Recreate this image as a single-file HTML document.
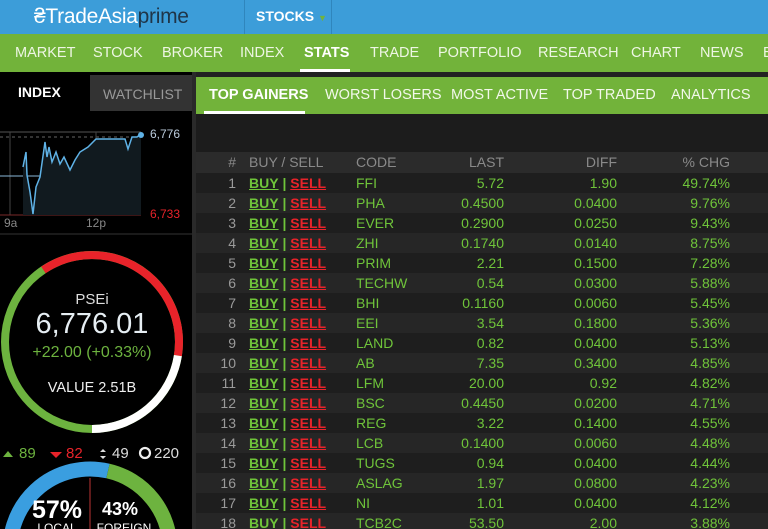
<!DOCTYPE html><html><head><style>
*{margin:0;padding:0;box-sizing:border-box}
html,body{width:768px;height:529px;overflow:hidden}
body{background:#1c1c1c;font-family:"Liberation Sans",sans-serif;position:relative}
.a{position:absolute}
#top{left:0;top:0;width:768px;height:34px;background:#3c9dd9}
#nav{left:0;top:34px;width:768px;height:38px;background:#72b33a;color:#eef6e4;font-size:14.5px}
#nav span{position:absolute;top:11px}
#left{left:0;top:72px;width:192px;height:457px;background:#000;overflow:hidden}
#sub{left:196px;top:77px;width:572px;height:37px;background:#72b33a;color:#f2f8ea;font-size:14.5px}
#sub span{position:absolute;top:10px}
.row{position:absolute;left:196px;width:572px;height:20px;font-size:14px;color:#6fc43a;background:#1e1e1e;overflow:hidden}
.row.e{background:#262626}
.row span{position:absolute;top:2px;white-space:nowrap}
.c0{right:532px;color:#9a9a9a}
.c1{left:53px}
.c2{left:160px}
.c3{right:264px}
.c4{right:151px}
.c5{right:38px}
.b{color:#6fc43a;font-weight:bold;text-decoration:underline}
.s{color:#e8232a;font-weight:bold;text-decoration:underline}
.h{background:#2b2b2b;color:#8a8a8a;height:21px}
.h span{color:#8a8a8a}
</style></head><body>
<div class="a" id="top">
<div class="a" style="left:34px;top:5px;font-size:21px;color:#fff;letter-spacing:-0.3px">₴TradeAsia<span style="color:#1f3548">prime</span></div>
<div class="a" style="left:244px;top:0;width:1px;height:34px;background:#2f86bd"></div>
<div class="a" style="left:331px;top:0;width:1px;height:34px;background:#2f86bd"></div>
<div class="a" style="left:256px;top:8px;font-size:14px;font-weight:bold;color:#fff">STOCKS <span style="color:#72b33a;font-size:9px">▼</span></div>
</div>
<div class="a" id="nav">
<span style="left:15px">MARKET</span><span style="left:93px">STOCK</span><span style="left:162px">BROKER</span><span style="left:240px">INDEX</span><span style="left:304px;font-weight:bold;color:#fff">STATS</span><span style="left:370px">TRADE</span><span style="left:438px">PORTFOLIO</span><span style="left:538px">RESEARCH</span><span style="left:631px">CHART</span><span style="left:700px">NEWS</span><span style="left:763px">B</span>
<div class="a" style="left:300px;top:35px;width:50px;height:3px;background:#fff"></div>
</div>
<div class="a" style="left:0;top:72px;width:768px;height:5px;background:#222"></div>
<div class="a" id="left">
<div class="a" style="left:18px;top:12px;color:#fff;font-weight:bold;font-size:14px">INDEX</div>
<div class="a" style="left:90px;top:3px;width:102px;height:36px;background:#333;color:#999;font-size:14px;padding:11px 0 0 13px">WATCHLIST</div>
<svg class="a" style="left:0;top:50px" width="192" height="407">
<line x1="0" y1="10" x2="141" y2="10" stroke="#555"/>
<line x1="0" y1="15" x2="141" y2="15" stroke="#666" stroke-dasharray="3,3"/>
<line x1="10" y1="10" x2="10" y2="93" stroke="#444"/>
<line x1="96" y1="10" x2="96" y2="93" stroke="#444"/>
<line x1="0" y1="93" x2="141" y2="93" stroke="#7a2a2a"/>
<line x1="0" y1="54" x2="141" y2="54" stroke="#8ab8d8"/>
<path d="M23,45 L26,30 L27,53 L30,70 L33,92 L36,65 L40,55 L45,20 L47,35 L49,25 L52,40 L56,30 L60,42 L64,35 L70,48 L75,38 L80,30 L88,25 L96,17 L125,17 L128,27 L132,15 L137,15 L141,12 L141,93 L23,93Z" fill="#111a1f"/>
<path d="M23,45 L26,30 L27,53 L30,70 L33,92 L36,65 L40,55 L45,20 L47,35 L49,25 L52,40 L56,30 L60,42 L64,35 L70,48 L75,38 L80,30 L88,25 L96,17 L125,17 L128,27 L132,15 L137,15 L141,12" fill="none" stroke="#5fb2e6" stroke-width="1.5"/>
<circle cx="141" cy="13" r="3" fill="#5fb2e6"/>
<text x="150" y="16" fill="#bcd" font-size="12">6,776</text>
<text x="150" y="96" fill="#e8232a" font-size="12">6,733</text>
<text x="4" y="105" fill="#888" font-size="12">9a</text>
<text x="86" y="105" fill="#888" font-size="12">12p</text>
<line x1="0" y1="112" x2="192" y2="112" stroke="#333"/>
<g transform="translate(92,220)" fill="none" stroke-width="8">
<circle r="87" stroke="#6db33f"/>
<path d="M-48.6,-72.1 A87,87 0 0 1 85.9,13.6" stroke="#e8232a"/>
<path d="M85.9,13.6 A87,87 0 0 1 0,87" stroke="#fff"/>
</g>
<text x="92" y="182" fill="#ddd" font-size="15" text-anchor="middle">PSEi</text>
<text x="92" y="211" fill="#e6eef3" font-size="29" text-anchor="middle">6,776.01</text>
<text x="92" y="235" fill="#6db33f" font-size="16" text-anchor="middle">+22.00 (+0.33%)</text>
<text x="92" y="270" fill="#eee" font-size="14.5" text-anchor="middle">VALUE 2.51B</text>
<path d="M3,335 L8,329 L13,335Z" fill="#6db33f"/><text x="19" y="336" fill="#6db33f" font-size="15">89</text>
<path d="M50,330 L56,336 L62,330Z" fill="#e8232a"/><text x="66" y="336" fill="#e8232a" font-size="15">82</text>
<path d="M100,330 L103,327 L106,330Z M100,334 L103,337 L106,334Z" fill="#ddd"/><text x="112" y="336" fill="#ddd" font-size="15">49</text>
<circle cx="145" cy="331" r="5" fill="none" stroke="#eee" stroke-width="2.2"/><text x="154" y="336" fill="#ddd" font-size="15">220</text>
<g transform="translate(90,427)" fill="none" stroke-width="15">
<path d="M-79,12 A80,80 0 0 1 18,-78" stroke="#3a9ee0"/>
<path d="M18,-78 A80,80 0 0 1 80,0" stroke="#6db33f"/>
</g>
<line x1="90" y1="356" x2="90" y2="407" stroke="#b33"/>
<text x="57" y="396" fill="#fff" font-size="25" font-weight="bold" text-anchor="middle">57%</text>
<text x="120" y="393" fill="#fff" font-size="18" font-weight="bold" text-anchor="middle">43%</text>
<text x="57" y="410" fill="#fff" font-size="12" text-anchor="middle">LOCAL</text>
<text x="124" y="410" fill="#fff" font-size="12" text-anchor="middle">FOREIGN</text>
</svg>
</div>
<div class="a" style="left:192px;top:72px;width:4px;height:457px;background:#2a2a2a"></div>
<div class="a" id="sub">
<span style="left:13px;font-weight:bold;color:#fff">TOP GAINERS</span><span style="left:129px">WORST LOSERS</span><span style="left:255px">MOST ACTIVE</span><span style="left:367px">TOP TRADED</span><span style="left:475px">ANALYTICS</span>
<div class="a" style="left:8px;top:34px;width:101px;height:3px;background:#fff"></div>
</div>
<div class="row h" style="top:152px"><span class="c0">#</span><span class="c1">BUY / SELL</span><span class="c2">CODE</span><span class="c3">LAST</span><span class="c4">DIFF</span><span class="c5">% CHG</span></div>
<div class="row" style="top:173px"><span class="c0">1</span><span class="c1"><u class="b">BUY</u> <b class="b" style="text-decoration:none">|</b> <u class="s">SELL</u></span><span class="c2">FFI</span><span class="c3">5.72</span><span class="c4">1.90</span><span class="c5">49.74%</span></div>
<div class="row e" style="top:193px"><span class="c0">2</span><span class="c1"><u class="b">BUY</u> <b class="b" style="text-decoration:none">|</b> <u class="s">SELL</u></span><span class="c2">PHA</span><span class="c3">0.4500</span><span class="c4">0.0400</span><span class="c5">9.76%</span></div>
<div class="row" style="top:213px"><span class="c0">3</span><span class="c1"><u class="b">BUY</u> <b class="b" style="text-decoration:none">|</b> <u class="s">SELL</u></span><span class="c2">EVER</span><span class="c3">0.2900</span><span class="c4">0.0250</span><span class="c5">9.43%</span></div>
<div class="row e" style="top:233px"><span class="c0">4</span><span class="c1"><u class="b">BUY</u> <b class="b" style="text-decoration:none">|</b> <u class="s">SELL</u></span><span class="c2">ZHI</span><span class="c3">0.1740</span><span class="c4">0.0140</span><span class="c5">8.75%</span></div>
<div class="row" style="top:253px"><span class="c0">5</span><span class="c1"><u class="b">BUY</u> <b class="b" style="text-decoration:none">|</b> <u class="s">SELL</u></span><span class="c2">PRIM</span><span class="c3">2.21</span><span class="c4">0.1500</span><span class="c5">7.28%</span></div>
<div class="row e" style="top:273px"><span class="c0">6</span><span class="c1"><u class="b">BUY</u> <b class="b" style="text-decoration:none">|</b> <u class="s">SELL</u></span><span class="c2">TECHW</span><span class="c3">0.54</span><span class="c4">0.0300</span><span class="c5">5.88%</span></div>
<div class="row" style="top:293px"><span class="c0">7</span><span class="c1"><u class="b">BUY</u> <b class="b" style="text-decoration:none">|</b> <u class="s">SELL</u></span><span class="c2">BHI</span><span class="c3">0.1160</span><span class="c4">0.0060</span><span class="c5">5.45%</span></div>
<div class="row e" style="top:313px"><span class="c0">8</span><span class="c1"><u class="b">BUY</u> <b class="b" style="text-decoration:none">|</b> <u class="s">SELL</u></span><span class="c2">EEI</span><span class="c3">3.54</span><span class="c4">0.1800</span><span class="c5">5.36%</span></div>
<div class="row" style="top:333px"><span class="c0">9</span><span class="c1"><u class="b">BUY</u> <b class="b" style="text-decoration:none">|</b> <u class="s">SELL</u></span><span class="c2">LAND</span><span class="c3">0.82</span><span class="c4">0.0400</span><span class="c5">5.13%</span></div>
<div class="row e" style="top:353px"><span class="c0">10</span><span class="c1"><u class="b">BUY</u> <b class="b" style="text-decoration:none">|</b> <u class="s">SELL</u></span><span class="c2">AB</span><span class="c3">7.35</span><span class="c4">0.3400</span><span class="c5">4.85%</span></div>
<div class="row" style="top:373px"><span class="c0">11</span><span class="c1"><u class="b">BUY</u> <b class="b" style="text-decoration:none">|</b> <u class="s">SELL</u></span><span class="c2">LFM</span><span class="c3">20.00</span><span class="c4">0.92</span><span class="c5">4.82%</span></div>
<div class="row e" style="top:393px"><span class="c0">12</span><span class="c1"><u class="b">BUY</u> <b class="b" style="text-decoration:none">|</b> <u class="s">SELL</u></span><span class="c2">BSC</span><span class="c3">0.4450</span><span class="c4">0.0200</span><span class="c5">4.71%</span></div>
<div class="row" style="top:413px"><span class="c0">13</span><span class="c1"><u class="b">BUY</u> <b class="b" style="text-decoration:none">|</b> <u class="s">SELL</u></span><span class="c2">REG</span><span class="c3">3.22</span><span class="c4">0.1400</span><span class="c5">4.55%</span></div>
<div class="row e" style="top:433px"><span class="c0">14</span><span class="c1"><u class="b">BUY</u> <b class="b" style="text-decoration:none">|</b> <u class="s">SELL</u></span><span class="c2">LCB</span><span class="c3">0.1400</span><span class="c4">0.0060</span><span class="c5">4.48%</span></div>
<div class="row" style="top:453px"><span class="c0">15</span><span class="c1"><u class="b">BUY</u> <b class="b" style="text-decoration:none">|</b> <u class="s">SELL</u></span><span class="c2">TUGS</span><span class="c3">0.94</span><span class="c4">0.0400</span><span class="c5">4.44%</span></div>
<div class="row e" style="top:473px"><span class="c0">16</span><span class="c1"><u class="b">BUY</u> <b class="b" style="text-decoration:none">|</b> <u class="s">SELL</u></span><span class="c2">ASLAG</span><span class="c3">1.97</span><span class="c4">0.0800</span><span class="c5">4.23%</span></div>
<div class="row" style="top:493px"><span class="c0">17</span><span class="c1"><u class="b">BUY</u> <b class="b" style="text-decoration:none">|</b> <u class="s">SELL</u></span><span class="c2">NI</span><span class="c3">1.01</span><span class="c4">0.0400</span><span class="c5">4.12%</span></div>
<div class="row e" style="top:513px;height:16px"><span class="c0">18</span><span class="c1"><u class="b">BUY</u> <b class="b" style="text-decoration:none">|</b> <u class="s">SELL</u></span><span class="c2">TCB2C</span><span class="c3">53.50</span><span class="c4">2.00</span><span class="c5">3.88%</span></div>
</body></html>
